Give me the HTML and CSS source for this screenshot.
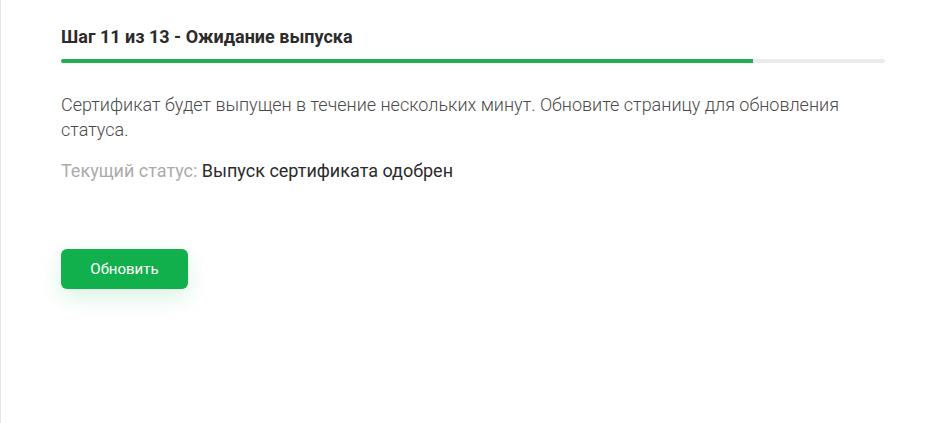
FILE: index.html
```html
<!DOCTYPE html>
<html lang="ru">
<head>
    <meta charset="UTF-8">
    <meta name="viewport" content="width=device-width, initial-scale=1.0">
    <title>Ожидание выпуска</title>
    <link rel="stylesheet" href="styles.css">
</head>
<body>
<div class="page">
    <section class="step">
        <h2 class="step-title">Шаг 11 из 13 - Ожидание выпуска</h2>
        <div class="progress">
            <div class="progress-bar" style="width: 84%"></div>
        </div>
        <p class="step-text">Сертификат будет выпущен в течение нескольких минут. Обновите страницу для обновления статуса.</p>
        <p class="step-status"><span class="status-label">Текущий статус:</span> Выпуск сертификата одобрен</p>
        <button class="refresh-btn">Обновить</button>
    </section>
</div>
</body>
</html>
```

FILE: styles.css
```css
body {
    font-family: Roboto, "Noto Sans", Arial, sans-serif;
    margin: 0;
    padding: 0;
    background: #fff;
    color: #333;
}

.page {
    min-height: 423px;
    border-left: 1px solid #e6e6e6;
    box-sizing: border-box;
}

.step {
    padding: 25px 58px 0 60px;
}

.step-title {
    margin: 0;
    font-size: 18px;
    line-height: 24px;
    font-weight: 700;
    color: #2b2b2b;
}

.progress {
    margin-top: 10px;
    height: 4px;
    background: #ebebee;
    border-radius: 2px;
    overflow: hidden;
}

.progress-bar {
    height: 100%;
    background: #1fae4f;
}

.step-text {
    margin: 29px 0 0 0;
    font-size: 18px;
    line-height: 25px;
    font-weight: 300;
    color: #4a4a4a;
}

.step-status {
    margin: 16px 0 0 0;
    font-size: 18px;
    line-height: 25px;
    color: #2b2b2b;
}

.status-label {
    color: #ababab;
}

.refresh-btn {
    margin-top: 66px;
    width: 127px;
    height: 40px;
    border: none;
    border-radius: 6px;
    background: #12b04c;
    color: #fff;
    font-family: Roboto, "Noto Sans", Arial, sans-serif;
    font-size: 15px;
    font-weight: 400;
    cursor: pointer;
    box-shadow: 0 8px 22px rgba(18, 176, 76, 0.16);
}
```
